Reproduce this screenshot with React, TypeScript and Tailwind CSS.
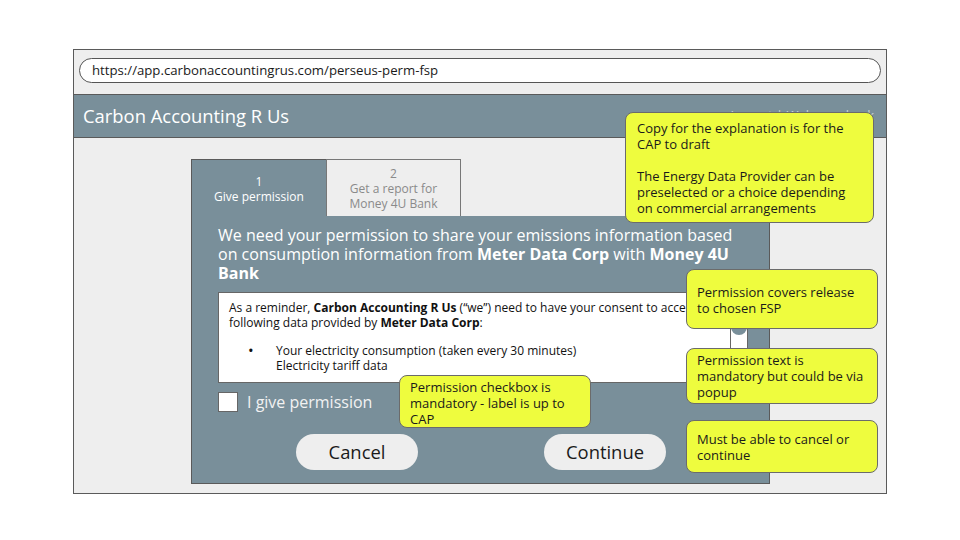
import React from "react";

const note =
  "absolute bg-[#eefc3e] border border-[#6b6b6b] rounded-[8px] text-[13px] leading-[16px] text-[#1a1a1a]";

export default function App() {
  return (
    <div
      className="w-[960px] h-[540px] bg-white pt-[49px] pl-[73px] relative overflow-hidden"
      style={{ fontFamily: '"Open Sans", "Noto Sans", sans-serif' }}
    >
      <div className="w-[814px] h-[445px] border border-[#5a5a5a] bg-[#eeeeee] flex flex-col">
        <div className="h-[44px] px-[5px] pt-[8px]">
          <div className="h-[25px] rounded-full bg-white border border-[#555] flex items-center pl-[12px] text-[13.2px] text-[#1a1a1a]">
            https://app.carbonaccountingrus.com/perseus-perm-fsp
          </div>
        </div>
        <div className="h-[44px] bg-[#798f9a] border-y border-[#5a5a5a] flex items-center pl-[9px] justify-between">
          <span className="text-[18.4px] text-white">Carbon Accounting R Us</span>
          <span className="text-[13px] text-[#c8d2d7] pr-[12px]">Logout | Welcome back</span>
        </div>
        <div className="pl-[117px] pt-[21px]">
          <div className="flex">
            <div className="w-[135px] h-[57px] bg-[#798f9a] border-l border-t border-[#5a5a5a] flex flex-col items-center justify-center text-[12px] leading-[15px] text-white pt-[1px]">
              <span>1</span>
              <span>Give permission</span>
            </div>
            <div className="w-[135px] h-[57px] bg-[#eeeeee] border border-b-0 border-[#777] flex flex-col items-center justify-center text-[12px] leading-[15px] text-[#8a8a8a]">
              <span>2</span>
              <span>Get a report for</span>
              <span>Money 4U Bank</span>
            </div>
          </div>
          <div className="w-[579px] h-[268px] bg-[#798f9a] border-x border-b border-[#5a5a5a] pl-[26px] pt-[10px]">
            <p className="text-[16px] leading-[19px] text-white w-[530px]">
              We need your permission to share your emissions information based on consumption information from{" "}
              <b>Meter Data Corp</b> with <b>Money 4U Bank</b>
            </p>
            <div className="mt-[9px] w-[530px] h-[91px] bg-white border border-[#666] flex text-[12px] leading-[15px] text-[#111]">
              <div className="flex-1 pl-[10px] pt-[7px] overflow-hidden">
                <p className="whitespace-nowrap">
                  As a reminder, <b>Carbon Accounting R Us</b> (“we”) need to have your consent to access the
                </p>
                <p>
                  following data provided by <b>Meter Data Corp</b>:
                </p>
                <div className="flex mt-[13px]">
                  <span className="w-[22px] pl-[19px] text-[15px] leading-[15px]">•</span>
                  <div className="pl-[25px]">
                    <p>Your electricity consumption (taken every 30 minutes)</p>
                    <p>Electricity tariff data</p>
                  </div>
                </div>
              </div>
              <div className="w-[17px] border-l border-[#666] relative">
                <div className="absolute left-0 right-0 top-[22px] h-[20px] rounded-b-full bg-[#798f9a]" />
              </div>
            </div>
            <div className="mt-[7px] flex items-center">
              <div className="w-[20px] h-[20px] bg-white border border-[#666]" />
              <span className="ml-[9px] text-[16px] text-[#f2f2f2]">I give permission</span>
            </div>
            <div className="mt-[20px] flex pl-[78px] gap-[126px]">
              <div className="w-[122px] h-[36px] rounded-full bg-[#eeeeee] flex items-center justify-center text-[18.4px] text-[#1a1a1a]">
                Cancel
              </div>
              <div className="w-[122px] h-[36px] rounded-full bg-[#eeeeee] flex items-center justify-center text-[18.4px] text-[#1a1a1a]">
                Continue
              </div>
            </div>
          </div>
        </div>
      </div>

      <div className={note + " left-[625px] top-[112px] w-[249px] h-[111px] pl-[11px] pt-[7px]"}>
        <p>Copy for the explanation is for the</p>
        <p>CAP to draft</p>
        <p className="mt-[16px]">The Energy Data Provider can be</p>
        <p>preselected or a choice depending</p>
        <p>on commercial arrangements</p>
      </div>
      <div className={note + " left-[686px] top-[269px] w-[192px] h-[60px] pl-[10px] pt-[14px]"}>
        <p>Permission covers release</p>
        <p>to chosen FSP</p>
      </div>
      <div className={note + " left-[686px] top-[348px] w-[192px] h-[56px] pl-[10px] pt-[3px]"}>
        <p>Permission text is</p>
        <p>mandatory but could be via</p>
        <p>popup</p>
      </div>
      <div className={note + " left-[686px] top-[420px] w-[192px] h-[53px] pl-[10px] pt-[10px]"}>
        <p>Must be able to cancel or</p>
        <p>continue</p>
      </div>
      <div className={note + " left-[399px] top-[375px] w-[192px] h-[53px] pl-[10px] pt-[3px]"}>
        <p>Permission checkbox is</p>
        <p>mandatory - label is up to</p>
        <p>CAP</p>
      </div>
    </div>
  );
}
